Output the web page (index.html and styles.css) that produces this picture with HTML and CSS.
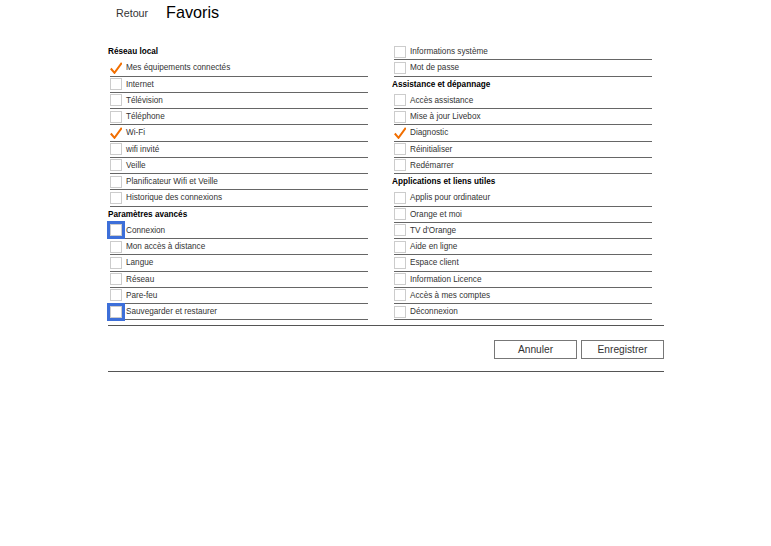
FILE: index.html
```html
<!DOCTYPE html>
<html>
<head>
    <title>Favoris</title>
    <link rel="stylesheet" href="styles.css">
</head>
<body>
    <div class="page">
        <div class="top-bar">
            <span class="back">Retour</span>
            <h1 class="page-title">Favoris</h1>
        </div>

        <div class="columns">
            <div class="col">
                <div class="group-title">Réseau local</div>
                <div class="item"><span class="box checked"><svg viewBox="0 0 12 12"><polyline points="0.8,6.5 4.5,10.8 11.8,0.8"/></svg></span><span class="label">Mes équipements connectés</span></div>
                <div class="item"><span class="box"></span><span class="label">Internet</span></div>
                <div class="item"><span class="box"></span><span class="label">Télévision</span></div>
                <div class="item"><span class="box"></span><span class="label">Téléphone</span></div>
                <div class="item"><span class="box checked"><svg viewBox="0 0 12 12"><polyline points="0.8,6.5 4.5,10.8 11.8,0.8"/></svg></span><span class="label">Wi-Fi</span></div>
                <div class="item"><span class="box"></span><span class="label">wifi invité</span></div>
                <div class="item"><span class="box"></span><span class="label">Veille</span></div>
                <div class="item"><span class="box"></span><span class="label">Planificateur Wifi et Veille</span></div>
                <div class="item"><span class="box"></span><span class="label">Historique des connexions</span></div>
                <div class="group-title">Paramètres avancés</div>
                <div class="item"><span class="box focus"></span><span class="label">Connexion</span></div>
                <div class="item"><span class="box"></span><span class="label">Mon accès à distance</span></div>
                <div class="item"><span class="box"></span><span class="label">Langue</span></div>
                <div class="item"><span class="box"></span><span class="label">Réseau</span></div>
                <div class="item"><span class="box"></span><span class="label">Pare-feu</span></div>
                <div class="item"><span class="box focus"></span><span class="label">Sauvegarder et restaurer</span></div>
            </div>
            <div class="col">
                <div class="item"><span class="box"></span><span class="label">Informations système</span></div>
                <div class="item"><span class="box"></span><span class="label">Mot de passe</span></div>
                <div class="group-title">Assistance et dépannage</div>
                <div class="item"><span class="box"></span><span class="label">Accès assistance</span></div>
                <div class="item"><span class="box"></span><span class="label">Mise à jour Livebox</span></div>
                <div class="item"><span class="box checked"><svg viewBox="0 0 12 12"><polyline points="0.8,6.5 4.5,10.8 11.8,0.8"/></svg></span><span class="label">Diagnostic</span></div>
                <div class="item"><span class="box"></span><span class="label">Réinitialiser</span></div>
                <div class="item"><span class="box"></span><span class="label">Redémarrer</span></div>
                <div class="group-title">Applications et liens utiles</div>
                <div class="item"><span class="box"></span><span class="label">Applis pour ordinateur</span></div>
                <div class="item"><span class="box"></span><span class="label">Orange et moi</span></div>
                <div class="item"><span class="box"></span><span class="label">TV d'Orange</span></div>
                <div class="item"><span class="box"></span><span class="label">Aide en ligne</span></div>
                <div class="item"><span class="box"></span><span class="label">Espace client</span></div>
                <div class="item"><span class="box"></span><span class="label">Information Licence</span></div>
                <div class="item"><span class="box"></span><span class="label">Accès à mes comptes</span></div>
                <div class="item"><span class="box"></span><span class="label">Déconnexion</span></div>
            </div>
        </div>

        <div class="actions">
            <button class="btn">Annuler</button>
            <button class="btn">Enregistrer</button>
        </div>
    </div>
</body>
</html>
```

FILE: styles.css
```css
body {
    margin: 0;
    background: #fff;
    font-family: "Liberation Sans", Arial, sans-serif;
    color: #333;
}

.page {
    width: 556px;
    margin-left: 108px;
}

.top-bar {
    display: flex;
    align-items: center;
    height: 25px;
    margin-bottom: 19px;
}

.back {
    font-size: 10.7px;
    color: #333;
    margin-left: 8px;
    margin-right: 18px;
}

.page-title {
    margin: 0;
    font-size: 16.2px;
    font-weight: normal;
    color: #000;
}

.columns {
    display: flex;
    gap: 24px;
    border-bottom: 1px solid #555;
    padding-bottom: 5px;
}

.col {
    width: 260px;
}

.group-title {
    height: 16.25px;
    line-height: 16.25px;
    font-size: 8.2px;
    font-weight: bold;
    color: #000;
}

.item {
    display: flex;
    align-items: center;
    box-sizing: border-box;
    height: 16.25px;
    margin-left: 2px;
    border-bottom: 1px solid #666;
}

.box {
    width: 12px;
    height: 12px;
    box-sizing: border-box;
    border: 1px solid #ccc;
    background: #fff;
    flex-shrink: 0;
}

.box.checked {
    border-color: transparent;
}

.box svg {
    display: block;
    width: 12px;
    height: 12px;
    margin: -1px;
}

.box polyline {
    fill: none;
    stroke: #f16e00;
    stroke-width: 2;
}

.box.focus {
    outline: 3px solid #3d6fd9;
}

.label {
    margin-left: 4px;
    font-size: 8.2px;
    color: #333;
}

.actions {
    display: flex;
    justify-content: flex-end;
    gap: 4px;
    padding: 14px 0 12px;
    border-bottom: 1px solid #555;
}

.btn {
    width: 83px;
    height: 19px;
    padding: 0;
    background: #fff;
    border: 1px solid #777;
    border-radius: 0;
    font-family: "Liberation Sans", Arial, sans-serif;
    font-size: 10.2px;
    color: #333;
}
```
